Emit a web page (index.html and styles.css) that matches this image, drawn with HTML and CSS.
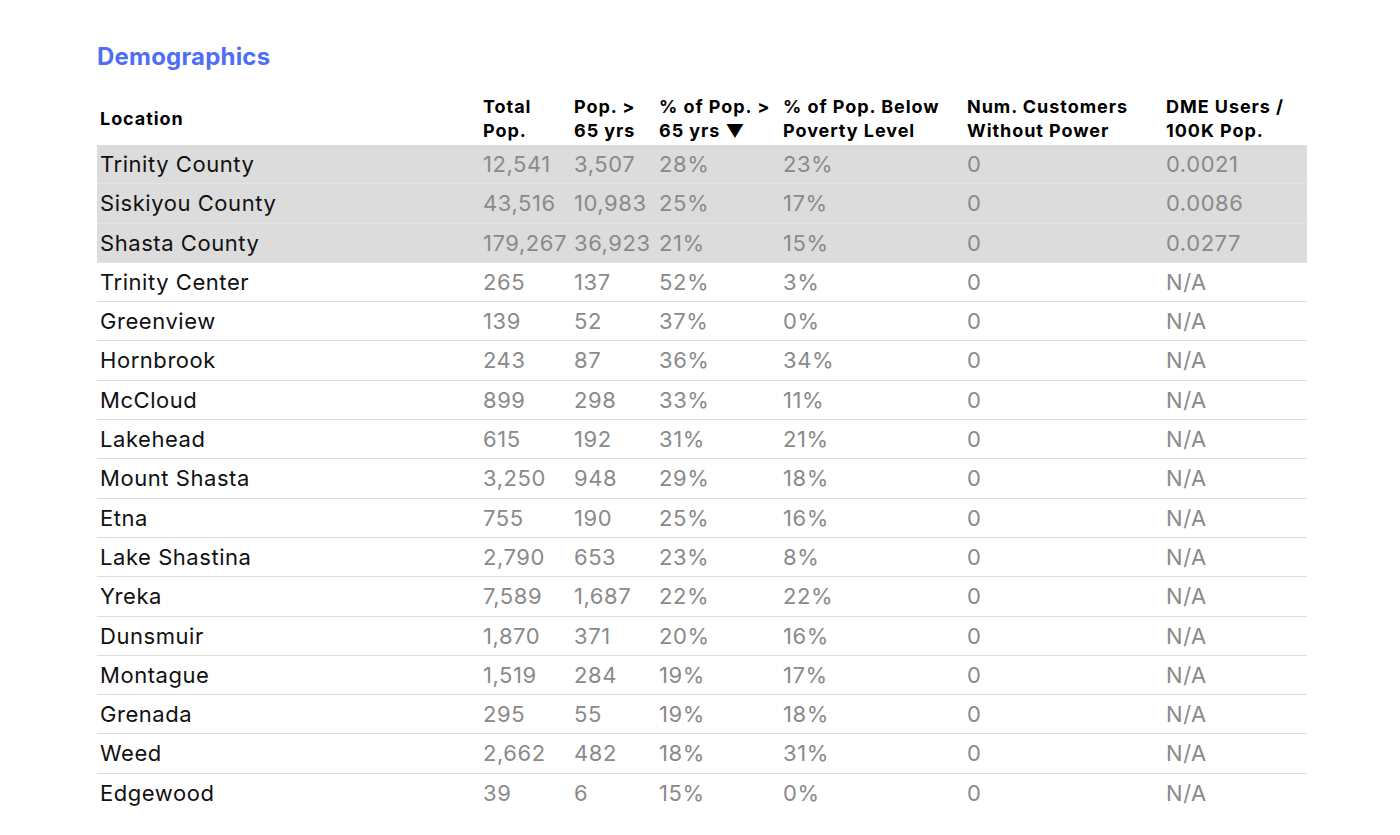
FILE: index.html
```html
<!DOCTYPE html>
<html>
<head>
<meta charset="utf-8">
<link rel="stylesheet" href="styles.css">
</head>
<body>
<section class="panel">
  <h2 class="title">Demographics</h2>
  <table class="demo">
    <colgroup>
      <col class="c-loc"><col class="c-total"><col class="c-p65"><col class="c-pct"><col class="c-pov"><col class="c-cust"><col class="c-dme">
    </colgroup>
    <thead>
      <tr>
        <th>Location</th>
        <th>Total<br>Pop.</th>
        <th>Pop. &gt;<br>65 yrs</th>
        <th>% of Pop. &gt;<br>65 yrs ▼</th>
        <th>% of Pop. Below<br>Poverty Level</th>
        <th>Num. Customers<br>Without Power</th>
        <th>DME Users /<br>100K Pop.</th>
      </tr>
    </thead>
    <tbody>
      <tr class="county"><td>Trinity County</td><td>12,541</td><td>3,507</td><td>28%</td><td>23%</td><td>0</td><td>0.0021</td></tr>
      <tr class="county"><td>Siskiyou County</td><td>43,516</td><td>10,983</td><td>25%</td><td>17%</td><td>0</td><td>0.0086</td></tr>
      <tr class="county"><td>Shasta County</td><td>179,267</td><td>36,923</td><td>21%</td><td>15%</td><td>0</td><td>0.0277</td></tr>
      <tr><td>Trinity Center</td><td>265</td><td>137</td><td>52%</td><td>3%</td><td>0</td><td>N/A</td></tr>
      <tr><td>Greenview</td><td>139</td><td>52</td><td>37%</td><td>0%</td><td>0</td><td>N/A</td></tr>
      <tr><td>Hornbrook</td><td>243</td><td>87</td><td>36%</td><td>34%</td><td>0</td><td>N/A</td></tr>
      <tr><td>McCloud</td><td>899</td><td>298</td><td>33%</td><td>11%</td><td>0</td><td>N/A</td></tr>
      <tr><td>Lakehead</td><td>615</td><td>192</td><td>31%</td><td>21%</td><td>0</td><td>N/A</td></tr>
      <tr><td>Mount Shasta</td><td>3,250</td><td>948</td><td>29%</td><td>18%</td><td>0</td><td>N/A</td></tr>
      <tr><td>Etna</td><td>755</td><td>190</td><td>25%</td><td>16%</td><td>0</td><td>N/A</td></tr>
      <tr><td>Lake Shastina</td><td>2,790</td><td>653</td><td>23%</td><td>8%</td><td>0</td><td>N/A</td></tr>
      <tr><td>Yreka</td><td>7,589</td><td>1,687</td><td>22%</td><td>22%</td><td>0</td><td>N/A</td></tr>
      <tr><td>Dunsmuir</td><td>1,870</td><td>371</td><td>20%</td><td>16%</td><td>0</td><td>N/A</td></tr>
      <tr><td>Montague</td><td>1,519</td><td>284</td><td>19%</td><td>17%</td><td>0</td><td>N/A</td></tr>
      <tr><td>Grenada</td><td>295</td><td>55</td><td>19%</td><td>18%</td><td>0</td><td>N/A</td></tr>
      <tr><td>Weed</td><td>2,662</td><td>482</td><td>18%</td><td>31%</td><td>0</td><td>N/A</td></tr>
      <tr class="last"><td>Edgewood</td><td>39</td><td>6</td><td>15%</td><td>0%</td><td>0</td><td>N/A</td></tr>
    </tbody>
  </table>
</section>
</body>
</html>
```
FILE: styles.css
```css
html, body {
  margin: 0;
  padding: 0;
  background: #ffffff;
}
body {
  font-family: Inter, "Noto Sans", sans-serif;
  color: #000;
}
.panel {
  padding: 43px 0 0 97px;
}
.title {
  margin: 0 0 21px 0;
  font-size: 24px;
  line-height: 28px;
  font-weight: 700;
  letter-spacing: 0.2px;
  color: #4d6ef5;
}
.demo {
  border-collapse: collapse;
  table-layout: fixed;
  width: 1210px;
}
.c-loc { width: 383px; }
.c-total { width: 91px; }
.c-p65 { width: 85px; }
.c-pct { width: 124px; }
.c-pov { width: 184px; }
.c-cust { width: 199px; }
.c-dme { width: 144px; }
.demo th {
  text-align: left;
  vertical-align: middle;
  font-size: 18px;
  line-height: 23.5px;
  font-weight: 700;
  letter-spacing: 0.95px;
  padding: 3px 3px;
  white-space: nowrap;
}
.demo td {
  font-size: 22px;
  line-height: 32.3px;
  letter-spacing: 0.55px;
  padding: 3px 3px;
  color: #8a8a8a;
  border-bottom: 1px solid #dddddd;
  white-space: nowrap;
  overflow: visible;
}
.demo td:first-child {
  color: #111;
}
.demo tr.county td {
  background: #dcdcdc;
  border-bottom-color: #e4e4e4;
}
.demo tr.last td {
  border-bottom: none;
}
```
